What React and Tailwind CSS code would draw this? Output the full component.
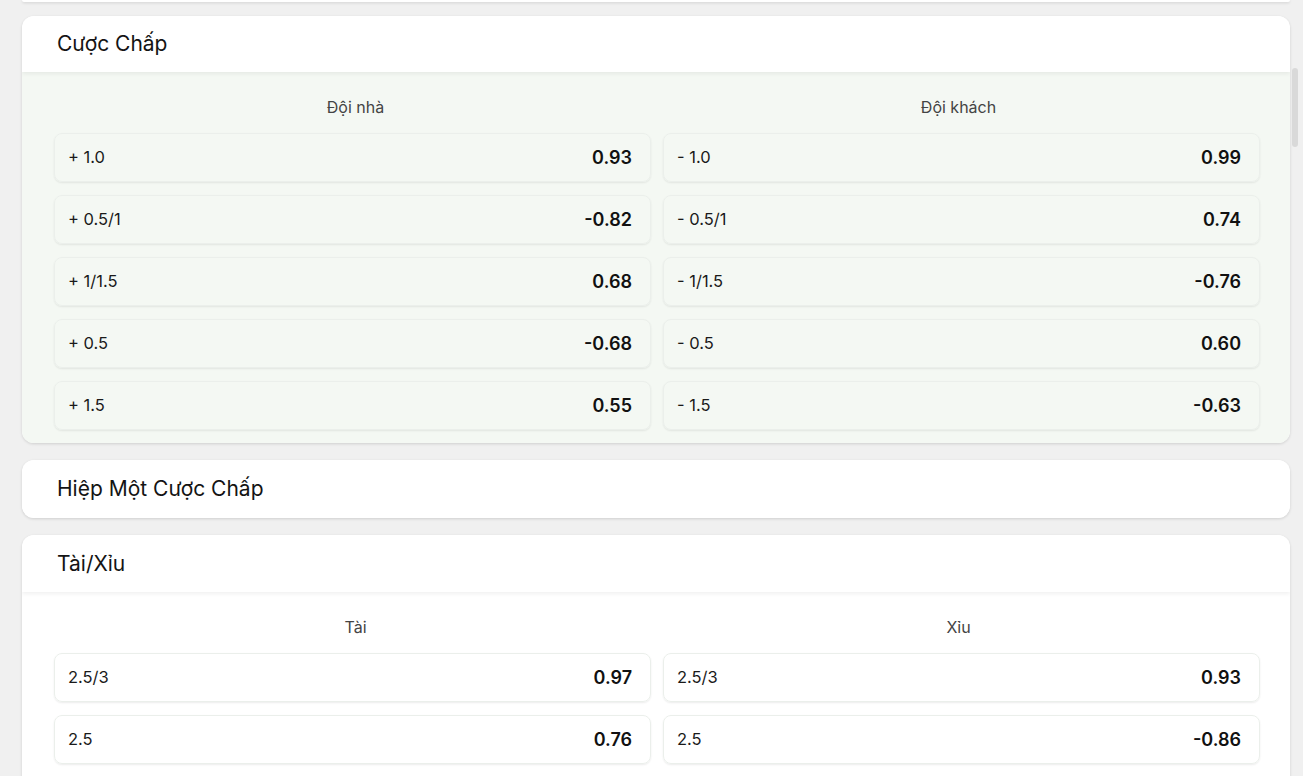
import React from "react";

const handicap = [
  { home: "+ 1.0", homeOdd: "0.93", away: "- 1.0", awayOdd: "0.99" },
  { home: "+ 0.5/1", homeOdd: "-0.82", away: "- 0.5/1", awayOdd: "0.74" },
  { home: "+ 1/1.5", homeOdd: "0.68", away: "- 1/1.5", awayOdd: "-0.76" },
  { home: "+ 0.5", homeOdd: "-0.68", away: "- 0.5", awayOdd: "0.60" },
  { home: "+ 1.5", homeOdd: "0.55", away: "- 1.5", awayOdd: "-0.63" },
];

const overUnder = [
  { home: "2.5/3", homeOdd: "0.97", away: "2.5/3", awayOdd: "0.93" },
  { home: "2.5", homeOdd: "0.76", away: "2.5", awayOdd: "-0.86" },
];

function OddCell({ label, odd }) {
  return (
    <div className="h-[49px] flex items-center justify-between pl-[13px] pr-[18px] rounded-[8px] border border-[#ebefeb] shadow-[0_1px_2px_rgba(0,0,0,0.08)]">
      <span className="text-[16.5px] leading-none text-[#1a1a1a]">{label}</span>
      <span className="text-[18px] leading-none font-semibold text-[#111] mt-[1px]">{odd}</span>
    </div>
  );
}

function MarketCard({ title, cols, rows, bodyClass, headerH = "h-[56px]", pb = "pb-[13px]" }) {
  return (
    <div className="bg-white rounded-[12px] overflow-hidden shadow-[0_1px_3px_rgba(0,0,0,0.14)]">
      <div className={`relative z-10 ${headerH} flex items-center px-[35px] bg-white text-[21px] text-[#141414] shadow-[0_2px_4px_rgba(0,0,0,0.06)]`}>
        {title}
      </div>
      {rows && (
        <div className={`pt-[24px] ${pb} pl-[32px] pr-[30px] ${bodyClass}`}>
          <div className="grid grid-cols-2 mb-[15px]">
            {cols.map((c) => (
              <div key={c} className="h-[22px] leading-[22px] text-center text-[16px] text-[#444]">
                {c}
              </div>
            ))}
          </div>
          <div className="grid grid-cols-2 gap-x-[12px] gap-y-[13px]">
            {rows.map((r, i) => (
              <React.Fragment key={i}>
                <OddCell label={r.home} odd={r.homeOdd} />
                <OddCell label={r.away} odd={r.awayOdd} />
              </React.Fragment>
            ))}
          </div>
        </div>
      )}
    </div>
  );
}

export default function App() {
  return (
    <div
      className="relative h-[776px] overflow-hidden bg-[#f0f0f0] pl-[22px] pr-[13px]"
      style={{ fontFamily: "Inter, 'Noto Sans', sans-serif" }}
    >
      <div className="h-[2px] bg-white rounded-b-[12px] shadow-[0_1px_3px_rgba(0,0,0,0.14)]" />
      <div className="flex flex-col gap-[17px] mt-[14px]">
        <MarketCard title="Cược Chấp" cols={["Đội nhà", "Đội khách"]} rows={handicap} bodyClass="bg-[#f4f8f3]" />
        <MarketCard title="Hiệp Một Cược Chấp" headerH="h-[58px]" />
        <MarketCard title="Tài/Xỉu" cols={["Tài", "Xỉu"]} rows={overUnder} bodyClass="bg-white" headerH="h-[57px]" pb="pb-[60px]" />
      </div>
      <div className="absolute right-[5px] top-[68px] w-[6px] h-[79px] rounded-full bg-[#d9d9d9]" />
    </div>
  );
}
